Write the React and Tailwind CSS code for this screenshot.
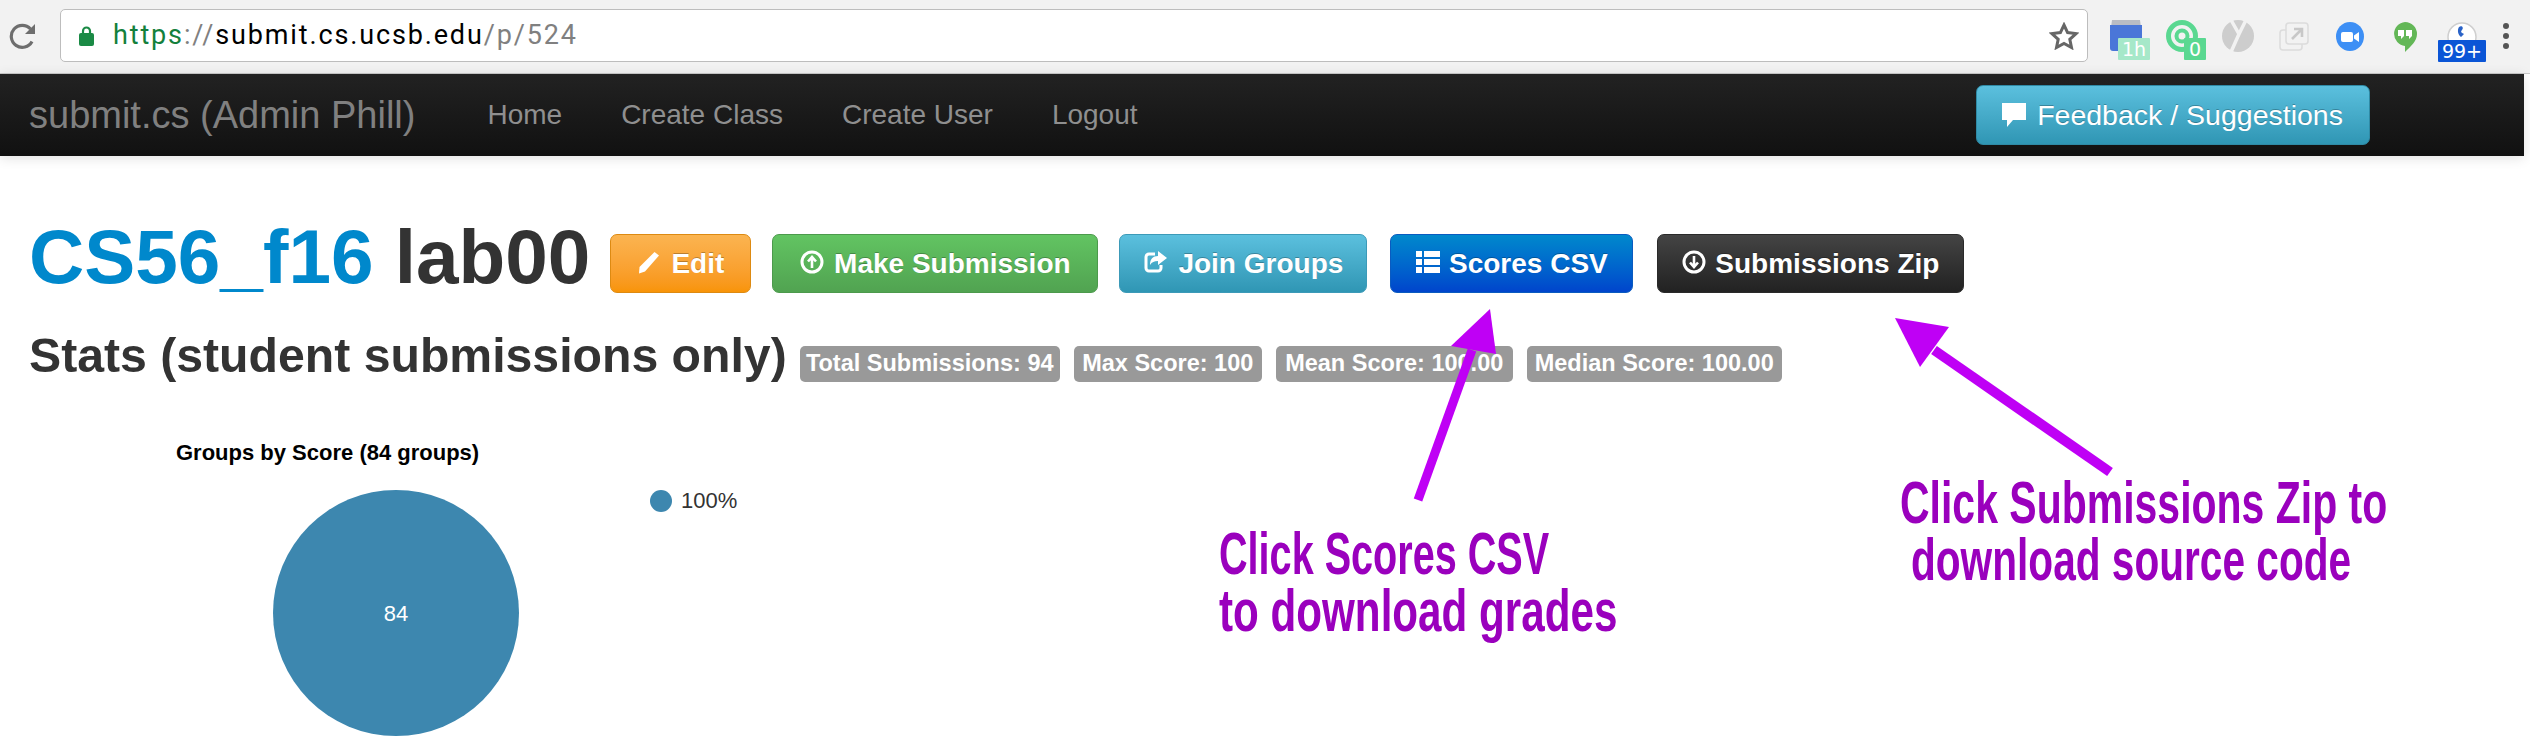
import React from 'react';

const sans = 'font-["Liberation_Sans",Arial,sans-serif]';

const PencilIcon = () => (
  <svg width="25" height="25" viewBox="0 0 25 25" fill="white">
    <path d="M17.5 3 L22 6.5 L8 22.5 L2 24.5 L2.5 18 Z" />
  </svg>
);
const CircleArrowUp = () => (
  <svg width="24" height="24" viewBox="0 0 24 24" fill="none" stroke="white">
    <circle cx="12" cy="12" r="10" strokeWidth="3" />
    <path d="M12 18V8M8 11.5l4-4.5 4 4.5" strokeWidth="2.6" />
  </svg>
);
const CircleArrowDown = () => (
  <svg width="24" height="24" viewBox="0 0 24 24" fill="none" stroke="white">
    <circle cx="12" cy="12" r="10" strokeWidth="3" />
    <path d="M12 6v10M8 12.5l4 4.5 4-4.500" strokeWidth="2.6" />
  </svg>
);
const ShareIcon = () => (
  <svg width="26" height="26" viewBox="0 0 26 26" fill="none" stroke="white">
    <path d="M12 5H6a3 3 0 0 0-3 3v11a3 3 0 0 0 3 3h9a3 3 0 0 0 3-3v-3" strokeWidth="3" />
    <path d="M15 2l9 7-9 7v-4c-4 0-6 1-8 4 0-6 3-9 8-9z" fill="white" stroke="none" />
  </svg>
);
const ListIcon = () => (
  <svg width="24" height="24" viewBox="0 0 24 24" fill="white">
    <path d="M0 1h6v6H0zM8 1h16v6H8zM0 9h6v6H0zM8 9h16v6H8zM0 17h6v6H0zM8 17h16v6H8z" />
  </svg>
);
const CommentIcon = () => (
  <svg width="24" height="24" viewBox="0 0 24 24" fill="white">
    <path d="M0 0H24V17H11L5 24V17H0Z" />
  </svg>
);
const ReloadIcon = () => (
  <svg width="28" height="26" viewBox="0 0 28 26" fill="none" stroke="#6e6e6e" strokeWidth="3.2">
    <path d="M23 18.5A11 11 0 1 1 21.5 6" />
    <path d="M26 1v10H16z" fill="#6e6e6e" stroke="none" />
  </svg>
);
const LockIcon = () => (
  <svg width="15" height="21" viewBox="0 0 15 21">
    <path d="M4 9V6a3.5 3.5 0 0 1 7 0v3" fill="none" stroke="#1a8a45" strokeWidth="2.2" />
    <rect x="0" y="8" width="15" height="13" rx="2" fill="#1a8a45" />
  </svg>
);
const StarIcon = () => (
  <svg width="30" height="28" viewBox="0 0 30 28" fill="none" stroke="#666" strokeWidth="3">
    <path d="M15 3l3.6 7.6 8.4 1-6.2 5.7 1.7 8.2L15 21.4 7.500 25.500l1.700-8.200L3 11.600l8.400-1z" />
  </svg>
);

const Badge = ({ bg, className, children }) => (
  <span className={`absolute top-[18px] h-[22px] flex items-center justify-center rounded-[1px] text-white text-[19px] font-["DejaVu_Sans",sans-serif] ${bg} ${className}`}>
    {children}
  </span>
);

function Extensions() {
  return (
    <div className="flex items-start ml-[22px] mt-[20px]">
      <div className="relative w-[32px] h-[32px]">
        <svg width="32" height="32" viewBox="0 0 32 32">
          <path d="M2 0h28l1 7H1z" fill="#b9bcc4" />
          <path d="M0 5h32v23a3 3 0 0 1-3 3H3a3 3 0 0 1-3-3z" fill="#4a76d8" />
        </svg>
        <Badge bg="bg-[#a6e8c9]" className="left-[8px] w-[32px]">1h</Badge>
      </div>
      <div className="relative w-[32px] h-[32px] ml-[24px]">
        <svg width="32" height="32" viewBox="0 0 32 32" fill="none">
          <circle cx="16" cy="16" r="13.500" stroke="#5ad891" strokeWidth="5" />
          <circle cx="16" cy="16" r="5.500" stroke="#5ad891" strokeWidth="4" />
        </svg>
        <Badge bg="bg-[#5ad891]" className="left-[18px] w-[22px]">0</Badge>
      </div>
      <div className="w-[32px] h-[32px] ml-[24px]">
        <svg width="32" height="32" viewBox="0 0 32 32">
          <circle cx="16" cy="16" r="16" fill="#cdcdcd" />
          <path d="M9 0l8 14L24 0M17 14L9 32" fill="none" stroke="#f2f2f2" strokeWidth="3.500" />
        </svg>
      </div>
      <div className="w-[30px] h-[30px] ml-[25px] mt-[2px]">
        <svg width="30" height="30" viewBox="0 0 30 30" fill="none" stroke="#dcdcdc" strokeWidth="1.600">
          <rect x="1" y="8" width="22" height="20" rx="3" />
          <rect x="7" y="1" width="22" height="21" rx="3" fill="#f2f2f2" />
          <path d="M13 17l10-10M15 7h8v8" stroke="#c8c8c8" strokeWidth="2.600" />
        </svg>
      </div>
      <div className="w-[28px] h-[29px] ml-[27px] mt-[2px]">
        <svg width="28" height="29" viewBox="0 0 28 29">
          <ellipse cx="14" cy="14.500" rx="14" ry="14.500" fill="#3d8ff5" />
          <rect x="5" y="10" width="12" height="10" rx="2" fill="white" />
          <path d="M18 13.500l5-3.500v10l-5-3.500z" fill="white" />
        </svg>
      </div>
      <div className="w-[24px] h-[30px] ml-[29px] mt-[2px]">
        <svg width="24" height="30" viewBox="0 0 24 30">
          <path d="M12 0a12 12 0 0 1 12 12c0 7-6 12-12 18v-6.100A12 12 0 0 1 12 0z" fill="#63b757" />
          <path d="M5 8h6v6l-3 3v-3H5zM13 8h6v6l-3 3v-3h-3z" fill="white" />
        </svg>
      </div>
      <div className="relative w-[30px] h-[32px] ml-[30px] mt-[2px]">
        <svg width="30" height="20" viewBox="0 0 30 20">
          <circle cx="15" cy="15" r="14" fill="white" stroke="#cfcfcf" strokeWidth="1.500" />
          <path d="M12 5c3-2 5 1 3 3s0 3 2 4l-3 3c-3-2-4-7-2-10z" fill="#2a63c8" />
        </svg>
        <Badge bg="bg-[#0b55d6]" className="left-[-9px] top-[16px] w-[48px]">99+</Badge>
      </div>
      <div className="flex flex-col gap-[4px] ml-[26px] mt-[3px]">
        <span className="w-[6px] h-[6px] rounded-full bg-[#555]" />
        <span className="w-[6px] h-[6px] rounded-full bg-[#555]" />
        <span className="w-[6px] h-[6px] rounded-full bg-[#555]" />
      </div>
    </div>
  );
}

function ActionButton({ icon, width, gradient, border, gap, children }) {
  return (
    <button className={`h-[59px] flex items-center justify-center rounded-[7px] border text-white font-bold text-[28px] [text-shadow:0_-1px_0_rgba(0,0,0,0.25)] ${width} ${gradient} ${border} ${gap}`}>
      <span className="-mt-[4px]">{icon}</span>
      <span>{children}</span>
    </button>
  );
}

const StatBadge = ({ width, children }) => (
  <span className={`h-[36px] flex items-center justify-center rounded-[5px] bg-[#999] text-white font-bold text-[23.500px] whitespace-nowrap ${width}`}>
    {children}
  </span>
);

export default function App() {
  return (
    <div className={`relative w-[2530px] h-[744px] overflow-hidden bg-white text-[#333] ${sans}`}>
      {/* browser chrome */}
      <div className="h-[74px] flex items-start bg-[#f2f2f2] border-b border-[#c9c9c9]">
        <div className="ml-[9px] mt-[23px]"><ReloadIcon /></div>
        <div className="ml-[23px] mt-[9px] w-[2028px] h-[53px] flex items-center bg-white border border-[#bdbdbd] rounded-[5px] pl-[18px] pr-[8px]">
          <LockIcon />
          <span className='ml-[19px] font-["Roboto",sans-serif] text-[27px] tracking-[1.85px] text-[#808080]'>
            <span className="text-[#13803c]">https</span>://<span className="text-black">submit.cs.ucsb.edu</span>/p/524
          </span>
          <span className="ml-auto"><StarIcon /></span>
        </div>
        <Extensions />
      </div>

      {/* navbar */}
      <nav className="relative h-[82px] mr-[6px] flex items-center pl-[29px] bg-gradient-to-b from-[#222] to-[#111] shadow-[0_2px_12px_rgba(0,0,0,0.12)]">
        <span className="text-[38px] text-[#808080] whitespace-nowrap">submit.cs (Admin Phill)</span>
        <div className="flex gap-[59px] ml-[72px] text-[28px] text-[#8f8f8f]">
          <span>Home</span>
          <span>Create Class</span>
          <span>Create User</span>
          <span>Logout</span>
        </div>
        <button className="ml-[838px] w-[394px] h-[60px] flex items-center justify-center gap-[11px] rounded-[7px] border border-[#2f8aa5] bg-gradient-to-b from-[#5bc0de] to-[#2f96b4] text-white text-[28.500px] [text-shadow:0_-1px_0_rgba(0,0,0,0.25)]">
          <CommentIcon />
          <span>Feedback / Suggestions</span>
        </button>
      </nav>

      {/* page */}
      <main className="pl-[29px]">
        <div className="flex items-start mt-[61px]">
          <h1 className="h-[79px] text-[76.500px] leading-[79px] font-bold whitespace-nowrap">
            <span className="text-[#0088cc]">CS56_f16</span> lab00
          </h1>
          <div className="flex ml-[20px] mt-[17px]">
            <ActionButton icon={<PencilIcon />} width="w-[141px]" gap="gap-[9px]" gradient="bg-gradient-to-b from-[#fbb450] to-[#f89406]" border="border-[#dd8a12]">Edit</ActionButton>
            <ActionButton icon={<CircleArrowUp />} width="w-[326px] ml-[21px]" gap="gap-[10px]" gradient="bg-gradient-to-b from-[#62c462] to-[#51a351]" border="border-[#4c9a4c]">Make Submission</ActionButton>
            <ActionButton icon={<ShareIcon />} width="w-[248px] ml-[21px]" gap="gap-[9px]" gradient="bg-gradient-to-b from-[#5bc0de] to-[#2f96b4]" border="border-[#3c9ab8]">Join Groups</ActionButton>
            <ActionButton icon={<ListIcon />} width="w-[243px] ml-[23px]" gap="gap-[9px]" gradient="bg-gradient-to-b from-[#0088cc] to-[#0044cc]" border="border-[#0a5bc0]">Scores CSV</ActionButton>
            <ActionButton icon={<CircleArrowDown />} width="w-[307px] ml-[24px]" gap="gap-[9px]" gradient="bg-gradient-to-b from-[#444] to-[#222]" border="border-[#2a2a2a]">Submissions Zip</ActionButton>
          </div>
        </div>

        <div className="flex items-start mt-[36px]">
          <h2 className="h-[47px] text-[48.200px] leading-[47px] font-bold whitespace-nowrap">Stats (student submissions only)</h2>
          <div className="flex gap-[14px] ml-[13px] mt-[14px]">
            <StatBadge width="w-[260px]">Total Submissions: 94</StatBadge>
            <StatBadge width="w-[188px]">Max Score: 100</StatBadge>
            <StatBadge width="w-[237px]">Mean Score: 100.00</StatBadge>
            <StatBadge width="w-[255px]">Median Score: 100.00</StatBadge>
          </div>
        </div>

        <div className="mt-[60px] ml-[147px] h-[22px] text-[22px] leading-[22px] font-bold text-black whitespace-nowrap">
          Groups by Score (84 groups)
        </div>
        <div className="flex items-start mt-[26px] ml-[244px]">
          <div className="w-[246px] h-[246px] rounded-full bg-[#3d87af] flex items-center justify-center text-white text-[22px]">84</div>
          <div className="flex items-center ml-[131px]">
            <span className="w-[22px] h-[22px] rounded-full bg-[#3d87af]" />
            <span className="ml-[9px] text-[22px] leading-[22px] text-[#333]">100%</span>
          </div>
        </div>
      </main>

      {/* annotations drawn on top of the screenshot */}
      <svg className="absolute left-0 top-0 pointer-events-none" width="2530" height="744" viewBox="0 0 2530 744">
        <path d="M1472 350L1418 500" stroke="#bf00f5" strokeWidth="9" />
        <path d="M1490 309L1451 346L1496 354Z" fill="#bf00f5" />
        <path d="M1934 350L2110 472" stroke="#bf00f5" strokeWidth="10" />
        <path d="M1895 318L1949 327L1920 367Z" fill="#bf00f5" />
      </svg>
      <div className="absolute left-[1219px] top-[525px] text-[60px] leading-[57px] font-bold text-[#9a00bd] whitespace-nowrap">
        <div className="origin-left scale-x-[0.66]">Click Scores CSV</div>
        <div className="origin-left scale-x-[0.703]">to download grades</div>
      </div>
      <div className="absolute left-[1900px] top-[474px] text-[60px] leading-[57px] font-bold text-[#9a00bd] whitespace-nowrap">
        <div className="origin-left scale-x-[0.683]">Click Submissions Zip to</div>
        <div className="ml-[11px] origin-left scale-x-[0.677]">download source code</div>
      </div>
    </div>
  );
}
